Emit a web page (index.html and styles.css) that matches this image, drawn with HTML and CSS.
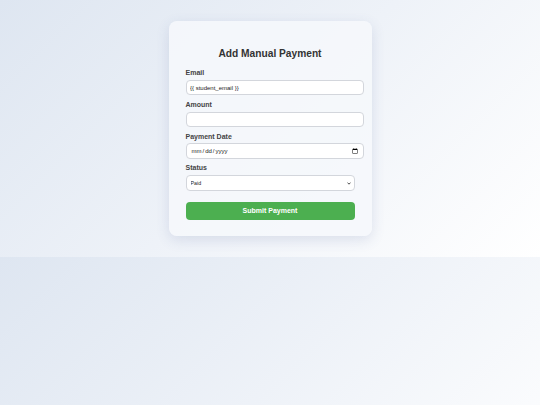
FILE: index.html
```html
<!DOCTYPE html>
<html lang="en">
<head>
<meta charset="utf-8">
<title>Add Manual Payment</title>
<link rel="stylesheet" href="styles.css">
</head>
<body>
  <div class="card">
    <h2 class="title">Add Manual Payment</h2>
    <form class="form">
      <label class="label" for="email">Email</label>
      <input class="field" id="email" type="text" value="{{ student_email }}">
      <label class="label" for="amount">Amount</label>
      <input class="field" id="amount" type="text">
      <label class="label" for="date">Payment Date</label>
      <input class="field field-date" id="date" type="date">
      <label class="label" for="status">Status</label>
      <select class="select" id="status">
        <option>Paid</option>
        <option>Pending</option>
      </select>
      <button class="submit" type="button">Submit Payment</button>
    </form>
  </div>
</body>
</html>
```

FILE: styles.css
```css
html {
  margin: 0;
}
body {
  margin: 0;
  padding: 21px 0 21px;
  font-family: "Liberation Sans", Arial, sans-serif;
  background: linear-gradient(135deg, #dee6f1 0%, #eef2f8 50%, #ffffff 100%);
}
.card {
  width: 169px;
  margin: 0 auto;
  padding: 17px 17px 16.5px;
  background: rgba(246, 248, 252, 0.85);
  border-radius: 8px;
  box-shadow: 0 4px 14px rgba(60, 80, 140, 0.14);
}
.title {
  margin: 9.5px 0 10.7px;
  font-size: 10.2px;
  font-weight: bold;
  color: #333;
  text-align: center;
}
.form {
  display: flex;
  flex-direction: column;
  align-items: flex-start;
}
.label {
  display: block;
  font-size: 7px;
  line-height: 8px;
  font-weight: bold;
  color: #444;
  margin-bottom: 2.7px;
}
.field {
  width: 100%;
  height: 13.5px;
  padding: 0 3.5px;
  margin: 0 0 5.5px;
  border: 1px solid #d3d6dc;
  border-radius: 4px;
  background: #fff;
  font-family: "Liberation Sans", Arial, sans-serif;
  font-size: 6px;
  color: #222;
  outline: none;
}
.field-date {
  font-size: 6px;
  padding-left: 4px;
  padding-right: 3px;
}
.select {
  appearance: none;
  -webkit-appearance: none;
  width: 100%;
  height: 16.4px;
  margin: 0 0 5.5px;
  padding: 0 4px;
  border: 1px solid #d3d6dc;
  border-radius: 4px;
  background: #fff url("data:image/svg+xml,%3Csvg xmlns='http://www.w3.org/2000/svg' width='8' height='6' viewBox='0 0 8 6'%3E%3Cpath d='M1 1.2 L4 4.4 L7 1.2' fill='none' stroke='%23222' stroke-width='1.6'/%3E%3C/svg%3E") no-repeat right 3px center / 4px 3px;
  font-family: "Liberation Sans", Arial, sans-serif;
  font-size: 5.3px;
  color: #222;
}
.submit {
  width: 100%;
  height: 18px;
  margin-top: 5px;
  border: none;
  border-radius: 4px;
  background: #4caf50;
  color: #fff;
  font-family: "Liberation Sans", Arial, sans-serif;
  font-size: 7px;
  font-weight: bold;
  cursor: pointer;
}
```
